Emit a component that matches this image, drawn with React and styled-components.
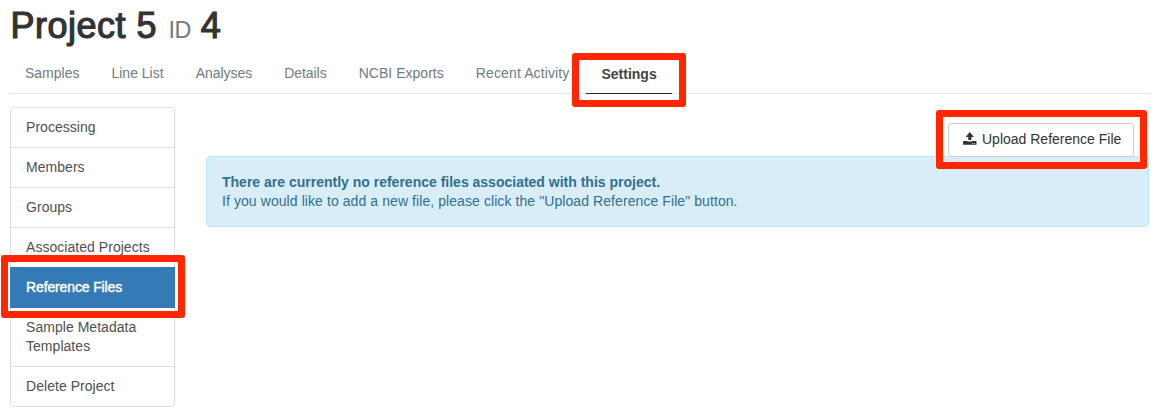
import React from "react";
import styled, { createGlobalStyle } from "styled-components";

const GlobalStyle = createGlobalStyle`
  *, *::before, *::after { box-sizing: border-box; }
  body {
    margin: 0;
    background: #fff;
    color: #333;
    font: 14px/20px "Liberation Sans", Arial, sans-serif;
    overflow: hidden;
  }
`;

const Page = styled.div`
  height: 417px;
  padding: 6px 7px 0 10px;
`;

const Title = styled.h1`
  margin: 0;
  height: 47px;
  padding-left: 0.5px;
  font-size: 36px;
  line-height: 40px;
  font-weight: 400;
  letter-spacing: 0.5px;
  -webkit-text-stroke: 1.2px #333;
  white-space: nowrap;

  small {
    margin: 0 -0.8px 0 1px;
    font-size: 23.4px;
    color: #777;
    letter-spacing: -0.5px;
    -webkit-text-stroke: 0;
  }
`;

const Tabs = styled.nav`
  display: flex;
  gap: 2px;
  height: 41px;
  border-bottom: 1px solid #e5e5e5;
`;

const Tab = styled.a`
  position: relative;
  height: 41px;
  padding: ${(p) => (p.$active ? "11px" : "10px")} 15px 0;
  color: ${(p) => (p.$active ? "#444" : "#6f7b80")};
  font-weight: ${(p) => (p.$active ? 700 : 400)};
  letter-spacing: ${(p) => p.$tracking || 0}px;
  border-bottom: 1px solid ${(p) => (p.$active ? "#1c2833" : "transparent")};
  white-space: nowrap;
`;

const Columns = styled.div`
  display: flex;
  gap: 31px;
  padding-top: 13px;
`;

const ListGroup = styled.ul`
  width: 165px;
  margin: 0;
  padding: 0;
  list-style: none;
  border: 1px solid #ddd;
  border-radius: 4px;
`;

const ListItem = styled.li`
  position: relative;
  margin: ${(p) => (p.$active ? "0 -1px -1px" : "0")};
  padding: 9.5px ${(p) => (p.$active ? "16px 11.5px" : "15px 10.5px")};
  z-index: ${(p) => (p.$active ? 1 : "auto")};
  line-height: 19px;
  color: ${(p) => (p.$active ? "#fff" : "#505050")};
  background: ${(p) => (p.$active ? "#337ab7" : "transparent")};
  -webkit-text-stroke: ${(p) => (p.$active ? "0.4px #fff" : "0")};
  letter-spacing: ${(p) => (p.$active ? "-0.13px" : "0.04px")};
  border-top: 1px solid ${(p) => (p.$active ? "#337ab7" : "#ddd")};

  &:first-child { border-top: 0; }
`;

const Main = styled.main`
  flex: 1;
  display: flex;
  flex-direction: column;
  padding-right: 1px;
`;

const Toolbar = styled.div`
  display: flex;
  justify-content: flex-end;
  height: 49px;
  padding: 16px 15px 0 0;
`;

const Button = styled.button`
  position: relative;
  display: flex;
  align-items: center;
  gap: 5px;
  height: 34px;
  width: 186px;
  padding: 0 0 2px 14px;
  border: 1px solid #ccc;
  border-radius: 4px;
  background: #fff;
  color: #333;
  font: inherit;
  white-space: nowrap;
`;

const Alert = styled.div`
  height: 71px;
  padding: 16px 15px 0;
  line-height: 19px;
  background: #d9edf7;
  border: 1px solid #bce8f1;
  border-radius: 4px;
  color: #31708f;
`;

const Line = styled.div`
  font-weight: ${(p) => (p.$strong ? 700 : 400)};
  letter-spacing: ${(p) => (p.$strong ? 0 : 0.08)}px;
`;

const Highlight = styled.span`
  position: absolute;
  z-index: 2;
  inset: ${(p) => p.$inset};
  border: 7px solid #ff2600;
  border-radius: 3px;
  pointer-events: none;
`;

const Icon = styled.svg`
  display: block;
  margin-bottom: 1px;
`;

const UploadIcon = () => (
  <Icon width="14" height="13" viewBox="0 0 14 13" fill="#333">
    <path d="M6.8 0 L11 4.9 H8.3 V8 H5.3 V4.9 H2.6 Z" />
    <path
      fillRule="evenodd"
      d="M.8 9 H4.3 L5 9.6 H8.6 L9.3 9 H13 Q13.5 9 13.5 9.5 V12.3 Q13.5 12.8 13 12.8 H.6 Q.1 12.8 .1 12.3 V9.5 Q.1 9 .6 9 Z M9 11 V11.8 H9.9 V11 Z M11.1 11 V11.8 H12 V11 Z"
    />
  </Icon>
);

const tabs = [
  { name: "Samples" },
  { name: "Line List" },
  { name: "Analyses", tracking: -0.04 },
  { name: "Details", tracking: -0.04 },
  { name: "NCBI Exports", tracking: 0.03 },
  { name: "Recent Activity", tracking: 0.12 },
  { name: "Settings" },
];
const sections = [
  "Processing",
  "Members",
  "Groups",
  "Associated Projects",
  "Reference Files",
  "Sample Metadata Templates",
  "Delete Project",
];

export default function App() {
  return (
    <Page>
      <GlobalStyle />
      <Title>
        Project 5 <small>ID</small> 4
      </Title>
      <Tabs>
        {tabs.map(({ name, tracking }) => (
          <Tab key={name} $active={name === "Settings"} $tracking={tracking}>
            {name}
            {name === "Settings" && <Highlight $inset="0 -14px -14px -14px" />}
          </Tab>
        ))}
      </Tabs>
      <Columns>
        <ListGroup>
          {sections.map((name) => (
            <ListItem key={name} $active={name === "Reference Files"}>
              {name}
              {name === "Reference Files" && <Highlight $inset="-13px -10px -10px -9px" />}
            </ListItem>
          ))}
        </ListGroup>
        <Main>
          <Toolbar>
            <Button>
              <UploadIcon />
              Upload Reference File
              <Highlight $inset="-14px -14px -13px -13px" />
            </Button>
          </Toolbar>
          <Alert>
            <Line $strong>There are currently no reference files associated with this project.</Line>
            <Line>If you would like to add a new file, please click the "Upload Reference File" button.</Line>
          </Alert>
        </Main>
      </Columns>
    </Page>
  );
}
